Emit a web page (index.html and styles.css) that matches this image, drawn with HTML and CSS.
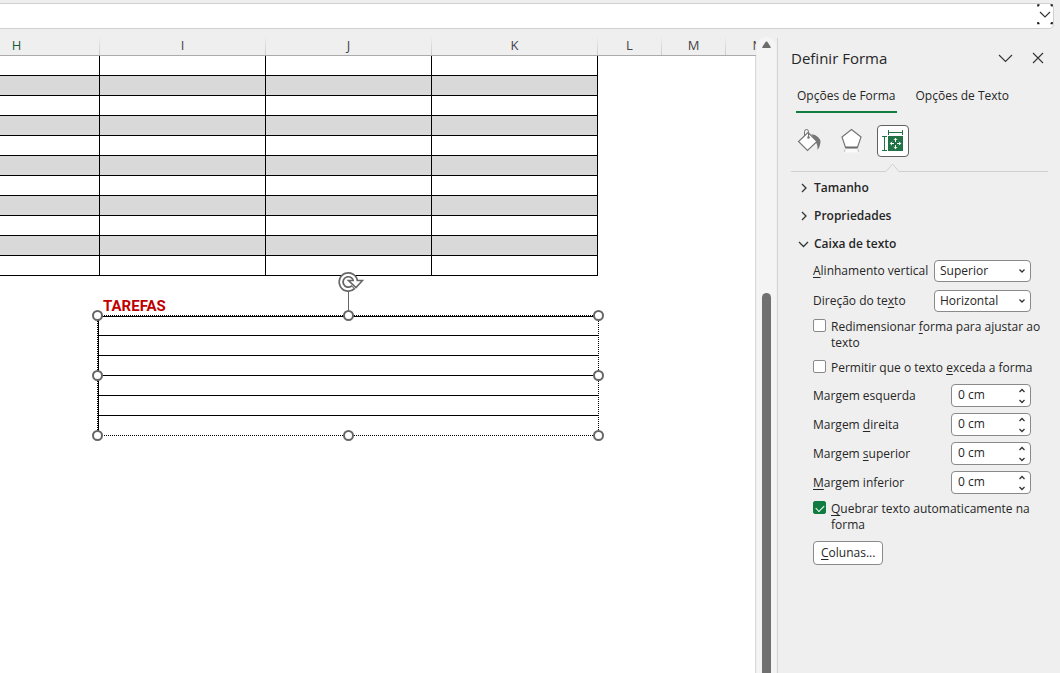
FILE: index.html
```html
<!DOCTYPE html>
<html lang="pt-BR">
<head>
<meta charset="utf-8">
<title>Definir Forma</title>
<link rel="stylesheet" href="styles.css">
</head>
<body>
<div class="app">
  <header class="formula">
    <input class="formula-input" type="text" aria-label="Barra de fórmulas">
    <button class="formula-expand" aria-label="Expandir barra de fórmulas">
      <svg width="16" height="21" viewBox="0 0 16 21" fill="none"><path d="M1 2.500V1H2.500M13.500 1H15V2.500M1 18V19.500H2.500M13.500 19.500H15V18" stroke="#111" stroke-width="1.500"/><path d="M3 8l5 5 5-5" stroke="#333" stroke-width="1.200"/></svg>
    </button>
  </header>
  <div class="workspace">
    <main class="sheet">
      <div class="columns">
        <span class="col col-first">H</span><span class="col">I</span><span class="col">J</span><span class="col">K</span><span class="col col-small">L</span><span class="col col-small">M</span><span class="col col-small">N</span>
      </div>
      <div class="canvas">
        <table class="grid" aria-label="Planilha">
          <tbody>
            <tr><td class="first"></td><td></td><td></td><td></td></tr>
            <tr><td></td><td></td><td></td><td></td></tr>
            <tr><td></td><td></td><td></td><td></td></tr>
            <tr><td></td><td></td><td></td><td></td></tr>
            <tr><td></td><td></td><td></td><td></td></tr>
            <tr><td></td><td></td><td></td><td></td></tr>
            <tr><td></td><td></td><td></td><td></td></tr>
            <tr><td></td><td></td><td></td><td></td></tr>
            <tr><td></td><td></td><td></td><td></td></tr>
            <tr><td></td><td></td><td></td><td></td></tr>
            <tr><td></td><td></td><td></td><td></td></tr>
          </tbody>
        </table>
        <h2 class="tasks-title">TAREFAS</h2>
        <div class="shape">
          <div class="line"></div><div class="line"></div><div class="line"></div><div class="line"></div><div class="line"></div><div class="line line-last"></div>
          <svg class="rotate" width="28" height="46" viewBox="0 0 28 46" fill="none">
            <path d="M12.500 20V42" stroke="#666"/>
            <path d="M17.500 17A7.200 7.200 0 1 1 19.500 11" stroke="#666" stroke-width="5.600"/>
            <path d="M12.500 10.500H26.500L20 17.500Z" fill="#fff" stroke="#666" stroke-width="1.600"/>
            <path d="M16.700 17.700A7.200 7.200 0 1 1 19.500 12" stroke="#fff" stroke-width="2.200"/>
          </svg>
          <i class="handle top left"></i><i class="handle top center"></i><i class="handle top right"></i>
          <i class="handle middle left"></i><i class="handle middle right"></i>
          <i class="handle bottom left"></i><i class="handle bottom center"></i><i class="handle bottom right"></i>
        </div>
      </div>
    </main>
    <div class="scrollbar">
      <button class="scroll-up" aria-label="Rolar para cima"><svg width="9" height="8" viewBox="0 0 9 8"><path d="M3.700 .8Q4.500 0 5.300 .8L8.700 6Q9 7 8 7H1Q0 7 .3 6Z" fill="#6b6b6b"/></svg></button>
      <div class="thumb"></div>
    </div>
    <aside class="pane">
      <div class="pane-head">
        <h1>Definir Forma</h1>
        <button class="icon-button" aria-label="Opções do painel"><svg width="16" height="16" viewBox="0 0 16 16" fill="none" stroke="#333" stroke-width="1.100"><path d="M1 5L7.500 11.500L14 5"/></svg></button>
        <button class="icon-button" aria-label="Fechar"><svg width="12" height="12" viewBox="0 0 12 12" fill="none" stroke="#333" stroke-width="1.100"><path d="M1 1l10 10M11 1L1 11"/></svg></button>
      </div>
      <div class="tabs">
        <button class="tab active">Opções de Forma</button>
        <button class="tab">Opções de Texto</button>
      </div>
      <div class="categories">
        <button class="category" aria-label="Preenchimento e linha"><svg width="26" height="26" viewBox="0 0 26 26" fill="none"><path d="M15.500 6Q24.500 8 24.500 14.500Q24 19 21.500 22Q22 16 19 13.500Z" fill="#767676"/><path d="M12 4.500L21 13.500L11.500 22.500L2.500 13.500Z" fill="#fff" stroke="#767676" stroke-width="1.200"/><path d="M8.500 8V3.500Q8.500 1.500 10.500 1.500T12.500 3.500V9" stroke="#767676"/><circle cx="12.500" cy="9.500" r="1.300" fill="#767676"/></svg></button>
        <button class="category" aria-label="Efeitos"><svg width="26" height="26" viewBox="0 0 26 26" fill="none"><path d="M13.500 1.500L23 9L19.500 19.500H7.500L4 9Z" fill="#fff" stroke="#767676" stroke-width="1.200"/><path d="M7.500 19.500H19.500" stroke="#6b6b6b" stroke-width="2"/><path d="M7.500 21L6.500 24.500H20.500L19.500 21Z" fill="#fafafa"/><path d="M7 21L6.500 24M20 21L20.500 24" stroke="#c4c4c4"/></svg></button>
        <button class="category selected" aria-label="Tamanho e propriedades"><svg width="26" height="26" viewBox="0 0 26 26" fill="none"><path d="M8 8H23V23H8Z" fill="#217346"/><path d="M8.500 2V7M22.500 2V7M8.500 4.500H22.500M2 8.500H7M2 22.500H7M4.500 8.500V22.500" stroke="#217346"/><path d="M15.500 10.500V14M15.500 17V20.500M10.500 15.500H14M17 15.500H20.500M13.800 12L15.500 10.300L17.200 12M13.800 19L15.500 20.700L17.200 19M12 13.800L10.300 15.500L12 17.200M19 13.800L20.700 15.500L19 17.200" stroke="#fff"/></svg></button>
      </div>
      <div class="divider"><span></span><svg width="15" height="9" viewBox="0 0 15 9" fill="none"><path d="M0 8.500H1L7.500 1L14 8.500H15" stroke="#d0d0d0"/></svg><span></span></div>
      <button class="section"><svg width="12" height="12" viewBox="0 0 12 12"><path d="M4 2l4 4-4 4"/></svg>Tamanho</button>
      <button class="section"><svg width="12" height="12" viewBox="0 0 12 12"><path d="M4 2l4 4-4 4"/></svg>Propriedades</button>
      <button class="section"><svg width="12" height="12" viewBox="0 0 12 12"><path d="M1 4L5.500 8.500L10 4"/></svg>Caixa de texto</button>
      <form class="fields">
        <div class="row select-row"><label for="valign"><u>A</u>linhamento vertical</label><span class="select"><select id="valign"><option>Superior</option></select><svg width="8" height="6" viewBox="0 0 8 6"><path d="M1.500 1.500L4 4L6.500 1.500"/></svg></span></div>
        <div class="row select-row"><label for="dir">Direção do te<u>x</u>to</label><span class="select"><select id="dir"><option>Horizontal</option></select><svg width="8" height="6" viewBox="0 0 8 6"><path d="M1.500 1.500L4 4L6.500 1.500"/></svg></span></div>
        <div class="check resize"><input type="checkbox" id="resize"><label for="resize">Redimensionar <u>f</u>orma para ajustar ao texto</label></div>
        <div class="check overflow"><input type="checkbox" id="over"><label for="over">Permitir que o texto <u>e</u>xceda a forma</label></div>
        <div class="row"><label for="ml">Mar<u>g</u>em esquerda</label><span class="spin"><input id="ml" type="text" value="0 cm"><svg width="8" height="18" viewBox="0 0 8 18"><path d="M1.500 5L4 2.500L6.500 5M1.500 13L4 15.500L6.500 13"/></svg></span></div>
        <div class="row"><label for="mr">Margem <u>d</u>ireita</label><span class="spin"><input id="mr" type="text" value="0 cm"><svg width="8" height="18" viewBox="0 0 8 18"><path d="M1.500 5L4 2.500L6.500 5M1.500 13L4 15.500L6.500 13"/></svg></span></div>
        <div class="row"><label for="mt">Margem <u>s</u>uperior</label><span class="spin"><input id="mt" type="text" value="0 cm"><svg width="8" height="18" viewBox="0 0 8 18"><path d="M1.500 5L4 2.500L6.500 5M1.500 13L4 15.500L6.500 13"/></svg></span></div>
        <div class="row"><label for="mb"><u>M</u>argem inferior</label><span class="spin"><input id="mb" type="text" value="0 cm"><svg width="8" height="18" viewBox="0 0 8 18"><path d="M1.500 5L4 2.500L6.500 5M1.500 13L4 15.500L6.500 13"/></svg></span></div>
        <div class="check"><input type="checkbox" id="wrap" checked><label for="wrap"><u>Q</u>uebrar texto automaticamente na forma</label></div>
        <button class="columns-button" type="button"><u>C</u>olunas...</button>
      </form>
    </aside>
  </div>
</div>
</body>
</html>
```

FILE: styles.css
```css
* { box-sizing: border-box; }
body {
  margin: 0;
  background: #efefef;
  color: #262626;
  font: 12px/16px "Open Sans", "Noto Sans", sans-serif;
}
button, input, select { font: inherit; color: inherit; }
button { padding: 0; border: 0; background: none; }
svg { display: block; flex: none; }
u { text-underline-offset: 2px; }

.app { height: 100vh; display: flex; flex-direction: column; overflow: hidden; }

.formula {
  display: flex;
  align-items: flex-start;
  flex: none;
  height: 26px;
  margin: 3px 6px 0 0;
  background: #fff;
  border: 1px solid #d0d0d0;
  border-left: 0;
  border-radius: 0 5px 5px 0;
}
.formula-input { flex: 1; border: 0; background: none; outline: 0; }

.workspace { flex: 1; display: flex; min-height: 0; }
.sheet { flex: 1; min-width: 0; display: flex; flex-direction: column; overflow: hidden; margin-top: 8px; }
.columns {
  display: flex;
  flex: none;
  height: 19px;
  border-bottom: 1px solid #ababab;
  overflow: hidden;
}
.col {
  flex: none;
  width: 166px;
  height: 18px;
  text-align: center;
  color: #444;
  font: 13px/16px "Open Sans", sans-serif;
  border-right: 1px solid;
  border-image: linear-gradient(#efefef, #c8c8c8) 1;
}
.col-first { width: 100px; padding-right: 66px; color: #185c37; }
.col-small { width: 64px; }

.canvas { flex: 1; min-height: 0; background: #fff; border-right: 1px solid #d8d8d8; overflow: hidden; }
.grid { border-collapse: separate; border-spacing: 0; table-layout: fixed; width: 598px; }
.grid td {
  width: 166px;
  height: 20px;
  padding: 0;
  border: solid #000;
  border-width: 0 1px 1px 0;
}
.grid .first { width: 100px; }
.grid tr:nth-child(even) td { background: #d9d9d9; }

.tasks-title { margin: 21px 0 0 103px; font: 700 15px/18px Roboto, sans-serif; color: #c00000; }
.shape {
  position: relative;
  width: 502px;
  height: 121px;
  margin-left: 97px;
  border: 1px dotted #000;
}
.line { height: 20px; border-bottom: 1px solid #000; border-left: 1px solid #000; }
.line:first-child { border-top: 1px solid #000; }
.line-last { height: 19px; border-bottom: 0; }
.handle {
  position: absolute;
  width: 11px;
  height: 11px;
  border: 2px solid #666;
  border-radius: 50%;
  background: #fff;
}
.left { left: -6px; }
.center { left: 245px; }
.right { right: -6px; }
.top { top: -6px; }
.middle { top: 54px; }
.bottom { bottom: -6px; }
.rotate { position: absolute; left: 238px; top: -46px; }

.scrollbar { flex: none; display: flex; flex-direction: column; align-items: center; width: 19px; margin: 8px 1px 0; background: #f4f4f4; border-radius: 9px 9px 0 0; }
.scroll-up { padding: 4px; }
.thumb { width: 9px; flex: 1; margin-top: 240px; background: #707070; border-radius: 5px 5px 0 0; }

.pane { flex: none; width: 283px; margin-top: 9px; padding: 7px 12px 0 13px; border-left: 1px solid #d4d4d4; }
.pane-head { display: flex; align-items: center; height: 26px; }
.pane-head h1 { flex: 1; margin: 0; font-size: 15px; line-height: 24px; font-weight: 400; }
.icon-button { width: 32px; display: flex; justify-content: center; }
.icon-button:last-child { margin-right: -6px; }

.tabs { display: flex; gap: 18px; margin: 17px 0 0 5px; }
.tab { height: 25px; padding: 0 1px 7px; border-bottom: 2px solid transparent; }
.active { border-color: #107c41; font-weight: 500; }

.categories { display: flex; gap: 10px; margin-top: 12px; padding-left: 2px; }
.category { display: grid; place-items: center; width: 32px; height: 32px; }
.selected { background: #fff; border: 1px solid #616161; border-radius: 4px; }
.divider { display: flex; align-items: flex-end; margin-top: 6px; }
.divider span { flex: 1; height: 1px; background: #d0d0d0; }
.divider span:first-child { flex: 0 0 94px; }

.section { display: flex; align-items: center; gap: 4px; height: 28px; padding-left: 7px; font-weight: 600; }
.divider + .section { margin-top: 2px; }
.section svg, .select svg, .spin svg { fill: none; stroke: #333; stroke-width: 1.3; }

.fields { margin: 0 17px 0 22px; }
.row { display: flex; align-items: center; justify-content: space-between; height: 29px; }
.select-row { height: 26px; margin-bottom: 4px; }
.select, .spin { display: flex; align-items: center; background: #fff; border: 1px solid #8a8a8a; border-radius: 4px; padding-right: 4px; }
.select { width: 97px; height: 22px; }
.spin { width: 80px; height: 23px; }
.select select { appearance: none; flex: 1; min-width: 0; height: 20px; border: 0; padding: 0 0 0 5px; background: none; outline: 0; }
.spin input { flex: 1; min-width: 0; height: 20px; border: 0; padding: 0 0 2px 6px; background: none; outline: 0; }
.check { display: flex; gap: 5px; align-items: flex-start; margin: 4px -17px 0 0; }
.check input {
  appearance: none;
  flex: none;
  width: 13px;
  height: 13px;
  margin: 0;
  border: 1px solid #8a8a8a;
  border-radius: 2px;
  background: #fff;
}
.check input:checked { border-color: #107c41; background: #107c41; display: grid; place-items: center; }
.check input:checked::after { content: ""; width: 7px; height: 4px; border: solid #fff; border-width: 0 0 1px 1px; transform: rotate(-45deg); }
.check.resize { margin-top: 5px; }
.check.overflow { margin-top: 9px; margin-bottom: 5px; }
.columns-button { height: 24px; padding: 0 7px; margin-top: 8px; background: #fff; border: 1px solid #8a8a8a; border-radius: 4px; }
```
